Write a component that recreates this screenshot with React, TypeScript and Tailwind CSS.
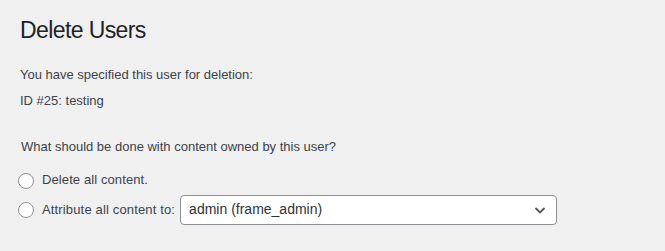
export default function App() {
  return (
    <div
      className="min-h-[251px] w-full bg-[#f0f0f1] px-5 text-[13px] leading-[1.4] text-[#3c434a]"
      style={{ fontFamily: '"Segoe UI", "Liberation Sans", Arial, sans-serif' }}
    >
      <h1 className="pt-[16px] text-[23px] font-normal leading-[1.3] tracking-[-0.6px] text-[#1d2327]">Delete Users</h1>
      <p className="mt-[20px]">You have specified this user for deletion:</p>
      <p className="mt-[8px]">ID #25: testing</p>

      <fieldset className="mt-[28px]">
        <p className="pl-[1px]">What should be done with content owned by this user?</p>
        <ul className="mt-[15px] flex flex-col">
          <li className="flex items-center">
            <span className="-ml-[2px] mr-[8px] inline-block h-4 w-4 rounded-full border border-[#8c8f94] bg-white" />
            <span className="tracking-[0.1px]">Delete all content.</span>
          </li>
          <li className="mt-[5px] flex items-center">
            <span className="-ml-[2px] mr-[8px] inline-block h-4 w-4 rounded-full border border-[#8c8f94] bg-white" />
            <span className="tracking-[0.15px]">Attribute all content to:</span>
            <div className="ml-[5px] flex h-[30px] w-[377px] items-center justify-between rounded-[4px] border border-[#8c8f94] bg-white pl-[8px] pr-[8px] text-[14px] text-[#2c3338]">
              <span>admin (frame_admin)</span>
              <svg width="16" height="16" viewBox="0 0 16 16" fill="none">
                <path d="M3.5 6 L8 10.5 L12.5 6" stroke="#50575e" strokeWidth="1.8" />
              </svg>
            </div>
          </li>
        </ul>
      </fieldset>
    </div>
  )
}
